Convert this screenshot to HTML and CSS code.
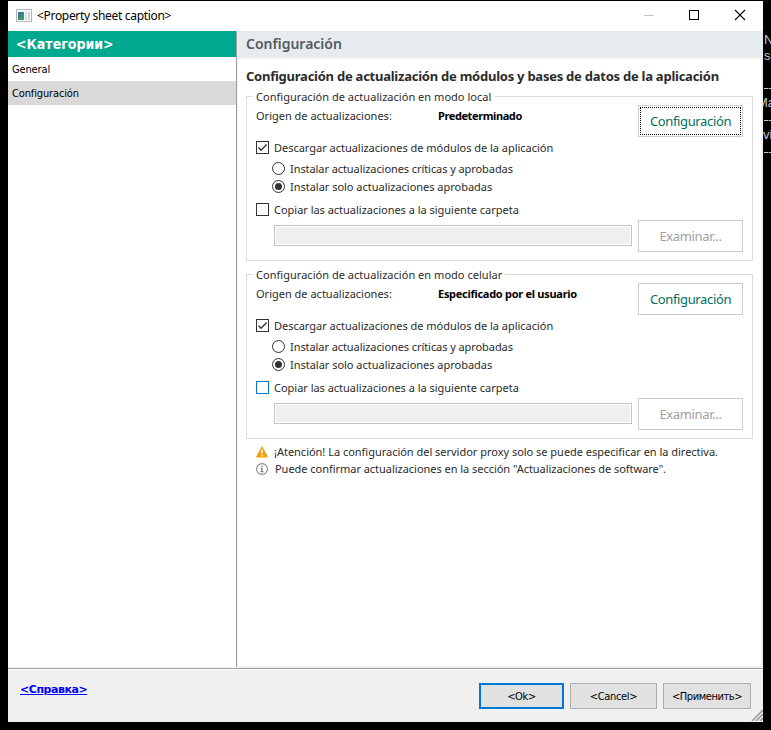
FILE: index.html
```html
<!DOCTYPE html>
<html lang="es">
<head>
<meta charset="utf-8">
<title>Property sheet</title>
<link rel="stylesheet" href="styles.css">
</head>
<body>
<div class="desktop">
  <div class="window">
    <header class="titlebar">
      <svg class="app-icon" width="16" height="13" viewBox="0 0 16 13">
        <defs><linearGradient id="g" x1="0" y1="0" x2=".6" y2="1"><stop offset="0" stop-color="#3a6fb0"/><stop offset="1" stop-color="#3fa05c"/></linearGradient></defs>
        <rect x=".5" y=".5" width="15" height="12" fill="#f8f8f8" stroke="#b4b8bc"/>
        <rect x="2" y="3" width="6" height="8" fill="url(#g)"/>
        <rect x="9" y="3" width="2" height="8" fill="#dcdfe1"/><rect x="12" y="3" width="2" height="8" fill="#cfd8d2"/>
      </svg>
      <span class="caption">&lt;Property sheet caption&gt;</span>
      <svg class="controls" width="104" height="12" viewBox="0 0 104 12">
        <path d="M0 6.500H10" stroke="#c4c4c4"/>
        <rect x="45.500" y="1.500" width="9" height="9" fill="none" stroke="#000"/>
        <path d="M91 1L101 11M101 1L91 11" stroke="#000" stroke-width="1.100"/>
      </svg>
    </header>
    <div class="body">
      <nav class="sidebar">
        <div class="sidebar-title">&lt;Категории&gt;</div>
        <div class="item">General</div>
        <div class="item selected">Configuración</div>
      </nav>
      <main class="page">
        <h1>Configuración</h1>
        <div class="content">
          <h2>Configuración de actualización de módulos y bases de datos de la aplicación</h2>
          <section class="group">
            <div class="legend"><span>Configuración de actualización en modo local</span></div>
            <div class="origin"><span class="label">Origen de actualizaciones:</span><b class="value">Predeterminado</b><button class="btn focused">Configuración</button></div>
            <div class="check"><svg class="box" viewBox="0 0 13 13"><rect x=".5" y=".5" width="12" height="12"/><path d="M2.500 6.500L5 9.200L10.700 3.500"/></svg>Descargar actualizaciones de módulos de la aplicación</div>
            <div class="radio critical"><svg class="box" viewBox="0 0 13 13"><circle cx="6.500" cy="6.500" r="6"/></svg>Instalar actualizaciones críticas y aprobadas</div>
            <div class="radio"><svg class="box" viewBox="0 0 13 13"><circle cx="6.500" cy="6.500" r="6"/><circle class="dot" cx="6.500" cy="6.500" r="3.500"/></svg>Instalar solo actualizaciones aprobadas</div>
            <div class="check copy"><svg class="box" viewBox="0 0 13 13"><rect x=".5" y=".5" width="12" height="12"/></svg>Copiar las actualizaciones a la siguiente carpeta</div>
            <div class="folder"><div class="field"></div><button class="btn disabled">Examinar...</button></div>
          </section>
          <section class="group">
            <div class="legend"><span>Configuración de actualización en modo celular</span></div>
            <div class="origin"><span class="label">Origen de actualizaciones:</span><b class="value wide">Especificado por el usuario</b><button class="btn">Configuración</button></div>
            <div class="check"><svg class="box" viewBox="0 0 13 13"><rect x=".5" y=".5" width="12" height="12"/><path d="M2.500 6.500L5 9.200L10.700 3.500"/></svg>Descargar actualizaciones de módulos de la aplicación</div>
            <div class="radio critical"><svg class="box" viewBox="0 0 13 13"><circle cx="6.500" cy="6.500" r="6"/></svg>Instalar actualizaciones críticas y aprobadas</div>
            <div class="radio"><svg class="box" viewBox="0 0 13 13"><circle cx="6.500" cy="6.500" r="6"/><circle class="dot" cx="6.500" cy="6.500" r="3.500"/></svg>Instalar solo actualizaciones aprobadas</div>
            <div class="check copy"><svg class="box hover" viewBox="0 0 13 13"><rect x=".5" y=".5" width="12" height="12"/></svg>Copiar las actualizaciones a la siguiente carpeta</div>
            <div class="folder"><div class="field"></div><button class="btn disabled">Examinar...</button></div>
          </section>
          <div class="note">
            <svg width="12" height="12" viewBox="0 0 12 12"><path d="M6 .8L11.500 11H.5Z" fill="#f0a30a" stroke="#f0a30a" stroke-linejoin="round"/><path d="M6 3.500V7.500M6 8.700V10.200" stroke="#fff" stroke-width="1.500"/></svg>
            <span>¡Atención! La configuración del servidor proxy solo se puede especificar en la directiva.</span>
          </div>
          <div class="note info">
            <svg width="12" height="12" viewBox="0 0 12 12"><circle cx="6" cy="6" r="5.400" fill="none" stroke="#8a8a8a" stroke-width="1.100"/><path d="M6 2.700V4M4.800 5.300H6V8.500M4.700 8.700H7.400" fill="none" stroke="#777" stroke-width="1.200"/></svg>
            <span>Puede confirmar actualizaciones en la sección "Actualizaciones de software".</span>
          </div>
        </div>
      </main>
    </div>
    <footer class="footer">
      <a class="help">&lt;Справка&gt;</a>
      <div class="actions">
        <button class="action ok">&lt;Ok&gt;</button>
        <button class="action cancel">&lt;Cancel&gt;</button>
        <button class="action apply">&lt;Применить&gt;</button>
      </div>
      <svg class="grip" width="12" height="12" viewBox="0 0 12 12"><path d="M1 12L12 1M5 12L12 5M9 12L12 9" stroke="#9a9a9a" stroke-width="1.600"/></svg>
    </footer>
  </div>
  <aside class="backdrop">
    <span>N</span><span class="second">s</span><i class="rule r1"></i><span class="cut">Ma</span><i class="rule r2"></i><span class="cut2">vi</span><i class="rule r3"></i>
  </aside>
</div>
</body>
</html>
```
FILE: styles.css
```css
* { box-sizing: border-box; }
body { margin: 0; background: #000; font: 11px/17px "Noto Sans", sans-serif; color: #2b2b2b; overflow: hidden; }
button { font: inherit; padding: 0; border-radius: 0; }
.desktop { display: flex; width: 771px; height: 730px; padding: 1px 0 0 8px; overflow: hidden; }
.window { display: flex; flex-direction: column; width: 755px; height: 721px; background: #f0f0f0; flex: none; }
.titlebar { display: flex; align-items: center; height: 30px; background: #fff; padding-left: 8px; flex: none; }
.app-icon { margin-top: -2px; }
.caption { margin: -2px 0 0 5px; color: #000; font-size: 12px; letter-spacing: -.32px; white-space: nowrap; }
.controls { margin-left: auto; margin-right: 15px; margin-top: -2px; }
.body { display: flex; height: 636px; flex: none; }
.sidebar { width: 229px; background: #fff; border-right: 1px solid #a0a0a0; font: 11px/24px "DejaVu Sans Condensed", "DejaVu Sans", sans-serif; color: #000; }
.sidebar-title { height: 26px; padding-left: 8px; background: #00a88e; color: #fff; font-size: 14px; line-height: 26px; font-weight: bold; }
.item { height: 24px; padding: 1px 0 0 4px; letter-spacing: -.14px; }
.selected { background: #d9d9d9; }
.page { flex: 1; display: flex; flex-direction: column; padding: 0 2px 1px 1px; }
h1 { margin: 0 -2px 2px 0; height: 26px; padding-left: 8px; background: #e6ebee; color: #555a5e; font-size: 14px; line-height: 26px; font-weight: 600; }
.content { flex: 1; background: #fff; padding: 8px 8px 0 8px; }
h2 { margin: 0; height: 29px; font-size: 13px; line-height: 18px; letter-spacing: -.245px; white-space: nowrap; color: #2b2b2b; }
.group { width: 507px; height: 165px; margin-bottom: 13px; border: 1px solid #dcdcdc; padding: 0 9px; white-space: nowrap; }
.legend { height: 8px; margin-top: -9px; margin-left: -3px; margin-bottom: 1px; }
.legend span { display: inline-block; background: #fff; padding: 0 3px; letter-spacing: .03px; }
.origin { display: flex; height: 40px; padding-top: 10px; margin-bottom: 1px; }
.origin .label { width: 182px; }
.value { flex: 1; color: #000; letter-spacing: -.4px; }
.value.wide { letter-spacing: -.28px; }
.btn { width: 105px; height: 32px; background: #fff; border: 1px solid #ccc; color: #00705f; font-size: 13px; letter-spacing: -.36px; flex: none; }
.origin .btn { margin-top: -2px; }
.focused { outline: 1px dotted #000; outline-offset: -3px; }
.btn.disabled { color: #a0a0a0; }
.check { display: flex; align-items: center; height: 19px; letter-spacing: -.02px; }
.radio { display: flex; align-items: center; height: 17px; padding-left: 16px; letter-spacing: -.02px; }
.critical { margin-top: 3px; margin-bottom: 1px; letter-spacing: -.075px; }
.box { width: 13px; height: 13px; margin-right: 5px; fill: none; stroke: #333; stroke-width: 1; flex: none; }
.box.hover { stroke: #0078d7; }
.box .dot { fill: #333; stroke: none; }
.box path { stroke-width: 1.3; }
.copy { margin-top: 5px; margin-bottom: 1px; }
.folder { display: flex; padding-left: 18px; }
.field { width: 358px; height: 21px; margin: 5px 6px 0 0; background: #efefef; border: 1px solid #c4c4c4; box-shadow: inset 0 0 0 1px #fff; }
.note { display: flex; align-items: center; height: 17px; margin-top: -9px; padding-left: 10px; gap: 6px; letter-spacing: -.018px; white-space: nowrap; }
.note.info { margin-top: 0; gap: 7px; letter-spacing: -.033px; }
.footer { position: relative; display: flex; justify-content: space-between; height: 55px; margin-top: 1px; border-top: 1px solid #a0a0a0; box-shadow: inset 0 1px #fff; padding: 14px 12px 0; }
.help { height: 17px; margin-top: -2px; color: #00f; font-family: "DejaVu Sans", sans-serif; font-weight: bold; letter-spacing: -.45px; text-decoration: underline; }
.actions { display: flex; gap: 6px; }
.action { height: 26px; background: #e1e1e1; border: 1px solid #adadad; color: #000; font-family: "DejaVu Sans Condensed", "DejaVu Sans", sans-serif; letter-spacing: -.35px; }
.ok { width: 85px; border: 2px solid #0078d7; }
.cancel { width: 87px; }
.apply { width: 88px; letter-spacing: -.42px; }
.grip { position: absolute; right: 0; bottom: 1px; }
.backdrop { display: flex; flex-direction: column; flex: 1; padding-top: 31px; color: #c8c8c8; font: 13px/16px "Liberation Sans", sans-serif; overflow: hidden; padding-left: 1px; }
.rule { flex: none; height: 1px; background: repeating-linear-gradient(90deg, #c8c8c8 0 4px, #555 4px 5px); }
.r1 { margin-top: 24px; }
.cut { margin: 6px 0 0 -7px; }
.r2 { margin-top: 9px; }
.cut2 { margin: 6px 0 0 -1px; }
.r3 { margin-top: 9px; }
```
